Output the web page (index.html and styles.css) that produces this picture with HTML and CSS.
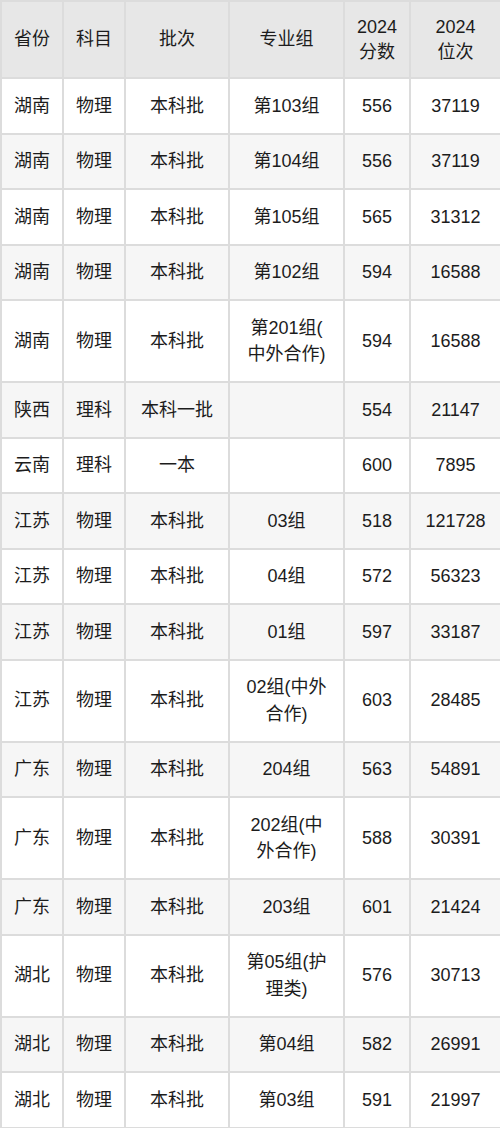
FILE: index.html
```html
<!DOCTYPE html>
<html lang="zh-CN">
<head>
<meta charset="utf-8">
<link rel="stylesheet" href="styles.css">
</head>
<body>
<table class="score-table">
  <colgroup>
    <col class="c1"><col class="c2"><col class="c3"><col class="c4"><col class="c5"><col class="c6">
  </colgroup>
  <thead>
    <tr><th>省份</th><th>科目</th><th>批次</th><th>专业组</th><th>2024 分数</th><th class="th-wide">2024 位次</th></tr>
  </thead>
  <tbody>
    <tr><td>湖南</td><td>物理</td><td>本科批</td><td>第103组</td><td>556</td><td>37119</td></tr>
    <tr><td>湖南</td><td>物理</td><td>本科批</td><td>第104组</td><td>556</td><td>37119</td></tr>
    <tr><td>湖南</td><td>物理</td><td>本科批</td><td>第105组</td><td>565</td><td>31312</td></tr>
    <tr><td>湖南</td><td>物理</td><td>本科批</td><td>第102组</td><td>594</td><td>16588</td></tr>
    <tr><td>湖南</td><td>物理</td><td>本科批</td><td>第201组(中外合作)</td><td>594</td><td>16588</td></tr>
    <tr><td>陕西</td><td>理科</td><td>本科一批</td><td></td><td>554</td><td>21147</td></tr>
    <tr><td>云南</td><td>理科</td><td>一本</td><td></td><td>600</td><td>7895</td></tr>
    <tr><td>江苏</td><td>物理</td><td>本科批</td><td>03组</td><td>518</td><td>121728</td></tr>
    <tr><td>江苏</td><td>物理</td><td>本科批</td><td>04组</td><td>572</td><td>56323</td></tr>
    <tr><td>江苏</td><td>物理</td><td>本科批</td><td>01组</td><td>597</td><td>33187</td></tr>
    <tr><td>江苏</td><td>物理</td><td>本科批</td><td>02组(中外合作)</td><td>603</td><td>28485</td></tr>
    <tr><td>广东</td><td>物理</td><td>本科批</td><td>204组</td><td>563</td><td>54891</td></tr>
    <tr><td>广东</td><td>物理</td><td>本科批</td><td>202组(中外合作)</td><td>588</td><td>30391</td></tr>
    <tr><td>广东</td><td>物理</td><td>本科批</td><td>203组</td><td>601</td><td>21424</td></tr>
    <tr><td>湖北</td><td>物理</td><td>本科批</td><td>第05组(护理类)</td><td>576</td><td>30713</td></tr>
    <tr><td>湖北</td><td>物理</td><td>本科批</td><td>第04组</td><td>582</td><td>26991</td></tr>
    <tr><td>湖北</td><td>物理</td><td>本科批</td><td>第03组</td><td>591</td><td>21997</td></tr>
  </tbody>
</table>
</body>
</html>
```

FILE: styles.css
```css
html, body {
  margin: 0;
  padding: 0;
  background: #ffffff;
}

body {
  font-family: "Liberation Sans", "Noto Sans CJK SC", sans-serif;
  color: #1c1c1c;
}

.score-table {
  width: 500px;
  border-collapse: collapse;
  table-layout: fixed;
  font-size: 18px;
  line-height: 26.5px;
}

.c1 { width: 62px; }
.c2 { width: 62px; }
.c3 { width: 104px; }
.c4 { width: 115px; }
.c5 { width: 66px; }
.c6 { width: 91px; }

.score-table th,
.score-table td {
  border: 2px solid #dcdcdc;
  text-align: center;
  vertical-align: middle;
  font-weight: normal;
}

.score-table td {
  padding: 13.5px 12px;
  line-break: anywhere;
}

.score-table thead th {
  background: #e7e7e7;
  line-height: 25px;
  padding: 12.5px 11.5px;
}

.score-table thead th.th-wide {
  padding-left: 16px;
  padding-right: 16px;
}

.score-table tbody tr:nth-child(even) td {
  background: #f6f6f6;
}
```
